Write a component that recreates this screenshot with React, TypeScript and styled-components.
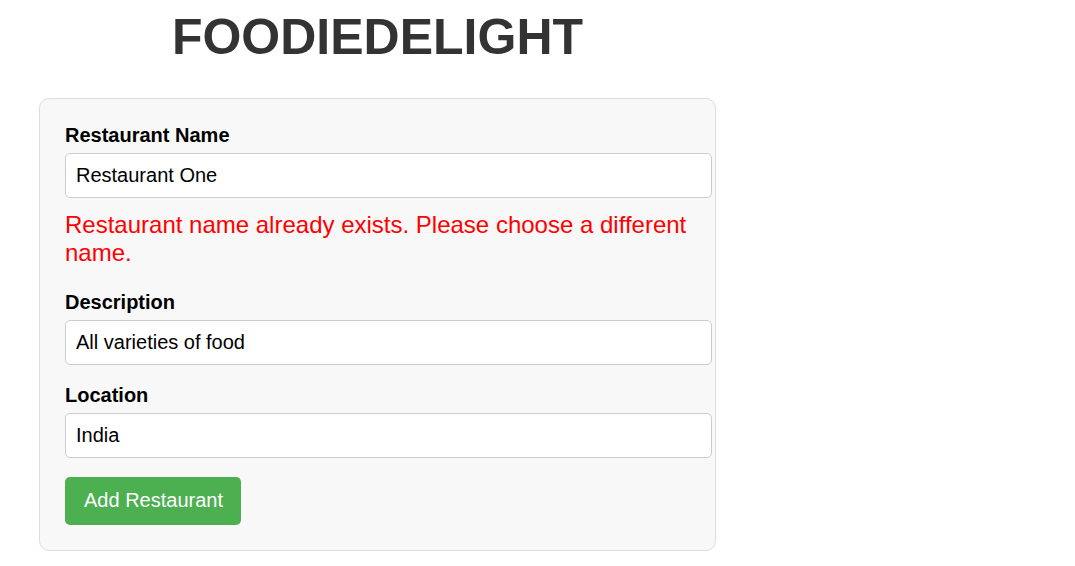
import React from "react";
import styled, { createGlobalStyle } from "styled-components";

const Global = createGlobalStyle`
  body {
    margin: 8px;
    background: #ffffff;
    font-family: "Liberation Sans", Arial, sans-serif;
  }
`;

const Page = styled.div`
  width: 677px;
  margin-left: 31px;
`;

const Title = styled.h1`
  margin: 0 0 32px;
  text-align: center;
  font-size: 50px;
  font-weight: 700;
  color: #333333;
`;

const Card = styled.form`
  background: #f8f8f8;
  border: 1px solid #dddddd;
  border-radius: 10px;
  padding: 25px;
`;

const Group = styled.div`
  display: flex;
  flex-direction: column;
  align-items: flex-start;
  margin-bottom: 19px;
`;

const Label = styled.label`
  display: block;
  font-size: 20px;
  line-height: 23px;
  font-weight: 700;
  color: #000000;
  margin-bottom: 6px;
`;

const Input = styled.input`
  display: block;
  width: 100%;
  box-sizing: content-box;
  padding: 10px;
  margin: 0;
  border: 1px solid #cccccc;
  border-radius: 5px;
  background: #ffffff;
  font-family: "Liberation Sans", Arial, sans-serif;
  font-size: 20px;
  line-height: 23px;
  color: #000000;
  outline: none;
`;

const ErrorText = styled.p`
  margin: 13px 0 5px;
  font-size: 24px;
  color: #ff0000;
`;

const Button = styled.button`
  display: block;
  background: #4caf50;
  color: #ffffff;
  border: none;
  border-radius: 5px;
  padding: 12px 18px 13px 19px;
  font-family: "Liberation Sans", Arial, sans-serif;
  font-size: 20px;
  line-height: 23px;
  cursor: pointer;
`;

export default function App() {
  return (
    <>
      <Global />
      <Page>
        <Title>FOODIEDELIGHT</Title>
        <Card onSubmit={(e) => e.preventDefault()}>
          <Group>
            <Label>Restaurant Name</Label>
            <Input defaultValue="Restaurant One" />
            <ErrorText>
              Restaurant name already exists. Please choose a different name.
            </ErrorText>
          </Group>
          <Group>
            <Label>Description</Label>
            <Input defaultValue="All varieties of food" />
          </Group>
          <Group>
            <Label>Location</Label>
            <Input defaultValue="India" />
          </Group>
          <Button type="submit">Add Restaurant</Button>
        </Card>
      </Page>
    </>
  );
}
